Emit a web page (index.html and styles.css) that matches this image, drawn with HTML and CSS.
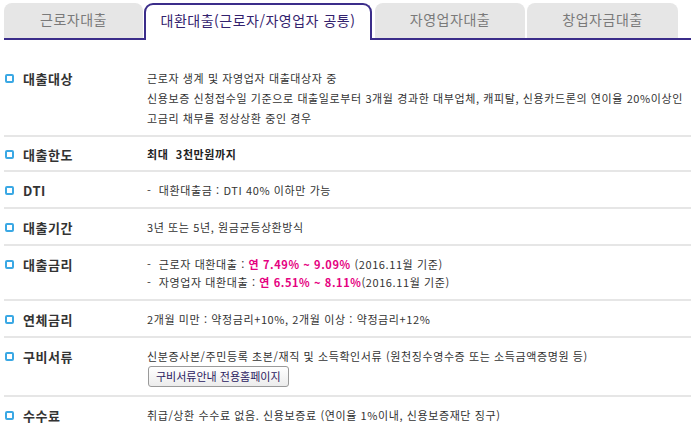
FILE: index.html
```html
<!DOCTYPE html>
<html lang="ko">
<head>
	<meta charset="utf-8">
	<link rel="stylesheet" href="styles.css">
</head>
<body>
	<div class="wrap">
		<ul class="tabs">
			<li class="tab tab1">근로자대출</li>
			<li class="tab tab2 on">대환대출(근로자/자영업자 공통)</li>
			<li class="tab tab3">자영업자대출</li>
			<li class="tab tab4">창업자금대출</li>
		</ul>

		<dl class="info">
			<div class="row first">
				<dt><span class="dot"></span>대출대상</dt>
				<dd class="tall">근로자 생계 및 자영업자 대출대상자 중<br>신용보증 신청접수일 기준으로 대출일로부터 3개월 경과한 대부업체, 캐피탈, 신용카드론의 연이율 20%이상인<br>고금리 채무를 정상상환 중인 경우</dd>
			</div>
			<div class="row second">
				<dt><span class="dot"></span>대출한도</dt>
				<dd><b>최대&nbsp; 3천만원까지</b></dd>
			</div>
			<div class="row">
				<dt><span class="dot"></span>DTI</dt>
				<dd>-&nbsp; 대환대출금 : DTI 40% 이하만 가능</dd>
			</div>
			<div class="row">
				<dt><span class="dot"></span>대출기간</dt>
				<dd>3년 또는 5년, 원금균등상환방식</dd>
			</div>
			<div class="row">
				<dt><span class="dot"></span>대출금리</dt>
				<dd>-&nbsp; 근로자 대환대출 : <em>연 7.49% ~ 9.09%</em> (2016.11월 기준)<br>-&nbsp; 자영업자 대환대출 : <em>연 6.51% ~ 8.11%</em>(2016.11월 기준)</dd>
			</div>
			<div class="row">
				<dt><span class="dot"></span>연체금리</dt>
				<dd>2개월 미만 : 약정금리+10%, 2개월 이상 : 약정금리+12%</dd>
			</div>
			<div class="row">
				<dt><span class="dot"></span>구비서류</dt>
				<dd>신분증사본/주민등록 초본/재직 및 소득확인서류 (원천징수영수증 또는 소득금액증명원 등)<br><a class="btn" href="#">구비서류안내 전용홈페이지</a></dd>
			</div>
			<div class="row last">
				<dt><span class="dot"></span>수수료</dt>
				<dd>취급/상환 수수료 없음. 신용보증료 (연이율 1%이내, 신용보증재단 징구)</dd>
			</div>
		</dl>
	</div>
</body>
</html>
```

FILE: styles.css
```css
body
{
	margin:0;
	background:#fff;
	font-family:"Noto Sans CJK KR","Liberation Sans",sans-serif;
	color:#333;
}
.wrap
{
	padding:3px 0 0 4px;
	width:687px;
}

/* tabs */
.tabs
{
	display:flex;
	align-items:flex-end;
	margin:0;
	padding:0;
	list-style:none;
	height:35px;
	border-bottom:2px solid #3b2d8a;
}
.tab
{
	box-sizing:border-box;
	height:35px;
	line-height:33px;
	background:#e6e6e6;
	border-radius:8px 8px 0 0;
	text-align:center;
	font-size:14px;
	letter-spacing:0.5px;
	color:#7a7a7a;
}
.tab1 { width:139px; margin-right:1px; }
.tab2 { width:228px; margin-right:3px; }
.tab3 { width:150px; margin-right:2px; }
.tab4 { width:151px; }
.tab.on
{
	height:37px;
	margin-bottom:-2px;
	background:#fff;
	border:2px solid #3b2d8a;
	border-bottom:none;
	border-radius:9px 9px 0 0;
	color:#33226e;
	line-height:31px;
}

/* rows */
.info
{
	margin:19px 0 0;
	padding:0;
}
.row
{
	display:grid;
	grid-template-columns:143px 1fr;
	padding:9px 0 8px;
	border-bottom:2px solid #e6e6e6;
}
.row.first
{
	padding-bottom:7px;
}
.row.second
{
	padding:8px 0 7px;
}
.row.last
{
	border-bottom:none;
}
dt
{
	display:flex;
	align-items:center;
	height:18px;
	font-size:13px;
	font-weight:bold;
	letter-spacing:0.5px;
	color:#333;
}
.first dt
{
	height:20px;
}
.dot
{
	box-sizing:border-box;
	width:9px;
	height:9px;
	margin:0 9px 0 1px;
	border:2px solid #3aa8e4;
	border-radius:2px;
	background:#fff;
}
dd
{
	margin:0;
	font-size:11px;
	line-height:18px;
	letter-spacing:0.6px;
	color:#333;
}
dd.tall
{
	line-height:20px;
}
dd b
{
	color:#222;
}
dd em
{
	font-style:normal;
	font-weight:bold;
	color:#e5007f;
}
.btn
{
	display:inline-block;
	box-sizing:border-box;
	height:21px;
	margin:1px 0 0 1px;
	padding:0 7px;
	line-height:19px;
	border:1px solid #9a9a9a;
	border-radius:3px;
	background:linear-gradient(#ffffff,#ececec);
	color:#2a2060;
	text-decoration:none;
	font-size:11px;
	letter-spacing:0;
}
```
